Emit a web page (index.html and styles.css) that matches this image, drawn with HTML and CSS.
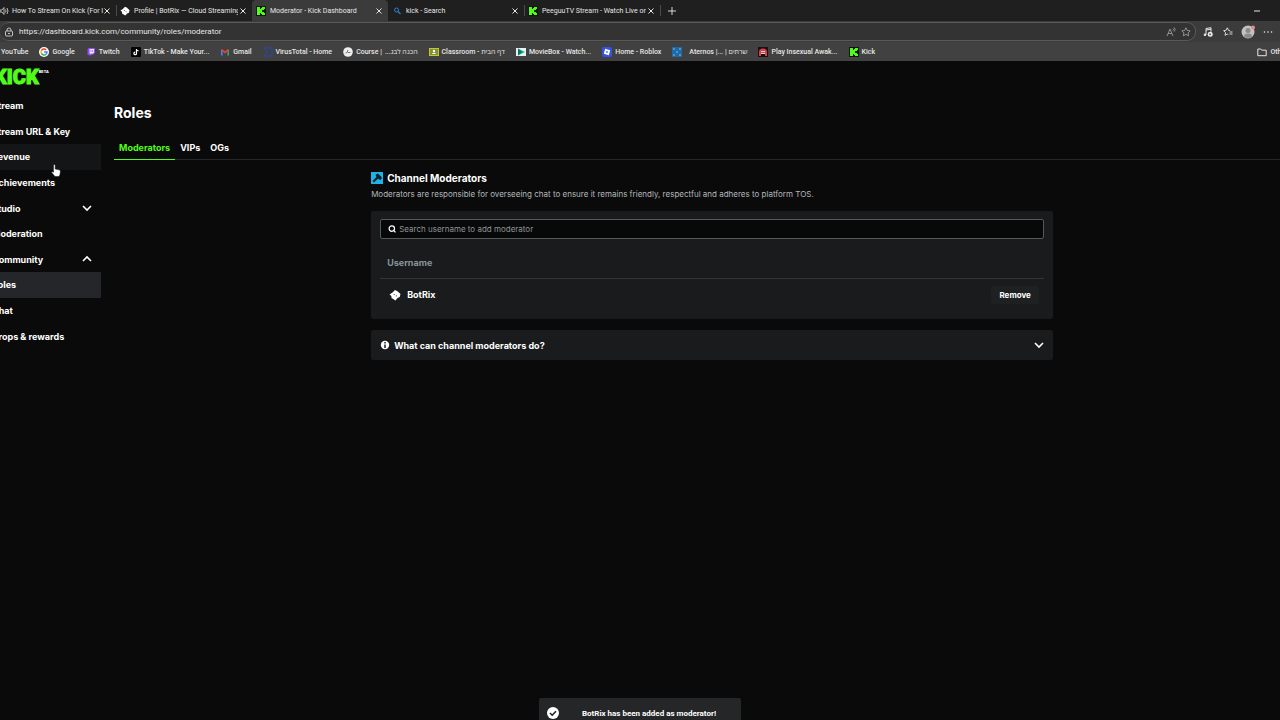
FILE: index.html
```
<!DOCTYPE html>
<html lang="en">
<head>
  <meta charset="UTF-8" />
  <meta name="viewport" content="width=device-width, initial-scale=1.0" />
  <title>Moderator - Kick Dashboard</title>
  <link rel="stylesheet" href="styles.css">
</head>
<body>
  <!-- shared icons -->
  <svg class="sprite" aria-hidden="true">
    <symbol id="i-close" viewBox="0 0 10 10"><path d="M2.500 2.500l5 5M7.500 2.500l-5 5" fill="none" stroke="currentColor" stroke-width="1"/></symbol>
    <symbol id="i-kick" viewBox="0 0 10 10">
      <rect width="10" height="10" fill="#0a1a06"/>
      <g fill="#53fc18"><rect x="1" y="1" width="3" height="8"/><rect x="4" y="3" width="2" height="4"/><rect x="5" y="2" width="3" height="2"/><rect x="6" y="1" width="3" height="2"/><rect x="5" y="6" width="3" height="2"/><rect x="6" y="7" width="3" height="2"/></g>
    </symbol>
    <symbol id="i-botrix" viewBox="0 0 12 12">
      <path d="M.5 5.500L3.500 3.500L6 1l2.500 1.200L11.500 5l-.8 3-2.200 1L6.400 11.500 3.800 9.800 2.500 9 2.400 7z" fill="#fff"/>
      <circle cx="5.200" cy="5.500" r=".6" fill="#333"/><circle cx="7.300" cy="6.800" r=".6" fill="#333"/>
    </symbol>
    <symbol id="i-down" viewBox="0 0 10 10"><path d="M1 3l4 4 4-4" fill="none" stroke="currentColor" stroke-width="1.600"/></symbol>
    <symbol id="i-up" viewBox="0 0 10 10"><path d="M1 7l4-4 4 4" fill="none" stroke="currentColor" stroke-width="1.600"/></symbol>
  </svg>

  <header class="browser">
    <div class="tabstrip">
      <div class="tab first">
        <svg class="fav" viewBox="0 0 10 10"><path d="M0 4h2l2-2.500v7L2 6H0z" fill="none" stroke="#ddd" stroke-width=".8"/><path d="M5.500 3.500q1 1.500 0 3M7 2q2 3 0 6" fill="none" stroke="#ddd" stroke-width=".8"/></svg>
        <button class="tab-title">How To Stream On Kick (For I</button>
        <button class="tab-close" aria-label="Close tab"><svg><use href="#i-close"/></svg></button>
      </div>
      <div class="tab divided">
        <svg class="fav"><use href="#i-botrix"/></svg>
        <button class="tab-title">Profile | BotRix — Cloud Streaming</button>
        <button class="tab-close" aria-label="Close tab"><svg><use href="#i-close"/></svg></button>
      </div>
      <div class="tab active">
        <svg class="fav"><use href="#i-kick"/></svg>
        <button class="tab-title">Moderator - Kick Dashboard</button>
        <button class="tab-close" aria-label="Close tab"><svg><use href="#i-close"/></svg></button>
      </div>
      <div class="tab">
        <svg class="fav" viewBox="0 0 10 10"><circle cx="4.500" cy="4" r="2" fill="none" stroke="#2f7fd0"/><path d="M6 5.500L8.500 8" stroke="#2f7fd0" stroke-width="1.200"/></svg>
        <button class="tab-title">kick - Search</button>
        <button class="tab-close" aria-label="Close tab"><svg><use href="#i-close"/></svg></button>
      </div>
      <div class="tab divided">
        <svg class="fav"><use href="#i-kick"/></svg>
        <button class="tab-title">PeeguuTV Stream - Watch Live on</button>
        <button class="tab-close" aria-label="Close tab"><svg><use href="#i-close"/></svg></button>
      </div>
      <button class="new-tab divided" aria-label="New tab"><svg viewBox="0 0 10 10"><path d="M5 1v8M1 5h8" stroke="currentColor" stroke-width=".9"/></svg></button>
      <button class="minimize" aria-label="Minimize"><svg viewBox="0 0 10 10"><path d="M2 5h6" stroke="currentColor"/></svg></button>
    </div>

    <div class="toolbar">
      <div class="address">
        <svg viewBox="0 0 10 10"><rect x="1.500" y="4" width="7" height="5" rx="1" fill="none" stroke="currentColor" stroke-width=".8"/><path d="M3 4V3q0-2 2-2t2 2v1M4 6.500h2" fill="none" stroke="currentColor" stroke-width=".8"/></svg>
        <input type="text" aria-label="Address" value="https://dashboard.kick.com/community/roles/moderator">
        <button aria-label="Read aloud"><svg viewBox="0 0 10 10"><path d="M1 9l3-7 3 7M2 6.500h4M7 1.500q1 1 0 2M8.200.5q2 1.800 0 4" fill="none" stroke="#999" stroke-width=".9"/></svg></button>
        <button aria-label="Add to favorites"><svg viewBox="0 0 10 10"><path d="M5 .8l1.300 2.700 2.900.4-2.100 2 .5 2.900L5 7.400 2.400 8.800l.5-2.900-2.100-2 2.900-.4z" fill="none" stroke="#aaa" stroke-width=".8"/></svg></button>
      </div>
      <button aria-label="Media"><svg viewBox="0 0 10 10"><path d="M3 7.500V1.500l5-.8v4M3 3l5-.8" fill="none" stroke="currentColor"/><circle cx="2" cy="7.800" r="1.300" fill="currentColor"/><circle cx="7.200" cy="7.200" r="2.500" fill="#eee"/><path d="M6.500 6v2.400l1.800-1.200z" fill="#333"/></svg></button>
      <button aria-label="Favorites"><svg viewBox="0 0 10 10"><path d="M7 3.400L5.500 3.300 4.300.8 3.100 3.300.6 3.700l1.900 1.800L2 8.300l2.300-1.200 1 .5M6.500 5h3M6.500 7h3" fill="none" stroke="currentColor" stroke-width=".9"/></svg></button>
      <button class="profile" aria-label="Profile"><svg viewBox="0 0 14 14"><circle cx="7" cy="7" r="6.500" fill="#c4c2c0"/><circle cx="7" cy="5.500" r="2.500" fill="#8c8a88"/><path d="M3 11.500q0-3 4-3t4 3q-4 3-8 0z" fill="#8c8a88"/><circle cx="12" cy="2.500" r="2" fill="#e58b95"/></svg></button>
      <button aria-label="Settings and more"><svg viewBox="0 0 10 10" fill="currentColor"><circle cx="1.500" cy="5" r=".8"/><circle cx="5" cy="5" r=".8"/><circle cx="8.500" cy="5" r=".8"/></svg></button>
    </div>

    <nav class="bookmarks" aria-label="Bookmarks">
      <a href="#">YouTube</a>
      <a href="#"><svg viewBox="0 0 10 10"><circle cx="5" cy="5" r="5" fill="#fff"/><g fill="none" stroke-width="1.500"><path d="M7.200 3A3 3 0 0 0 2.400 3.600" stroke="#ea4335"/><path d="M2.400 3.600a3 3 0 0 0 0 2.800" stroke="#fbbc05"/><path d="M2.400 6.400A3 3 0 0 0 7 7.200" stroke="#34a853"/><path d="M7 7.200A3 3 0 0 0 8 5H5" stroke="#4285f4"/></g></svg>Google</a>
      <a href="#"><svg viewBox="0 0 10 10"><path d="M2.500 1H9v5L6.800 8H5L3.500 9.500V8H1.500V2.500z" fill="#9146ff"/><path d="M3.500 2H8v3.600L7 6.500H5.200L4.400 7.200v-.7h-.9z" fill="#eee"/><path d="M5 3v2M6.700 3v2" stroke="#9146ff" stroke-width=".7"/></svg>Twitch</a>
      <a href="#"><svg viewBox="0 0 10 10"><rect width="10" height="10" rx="1" fill="#050505"/><path d="M5.500 2v4.400a1.300 1.300 0 1 1-1.300-1.300M5.500 2q.3 1.600 2 1.800" fill="none" stroke="#fff" stroke-width="1.200"/></svg>TikTok - Make Your...</a>
      <a href="#"><svg viewBox="0 0 10 10" fill="none" stroke-width="1.600"><path d="M1.800 8.500V3" stroke="#4285f4"/><path d="M8.200 8.500V3" stroke="#34a853"/><path d="M1.500 2.500L5 5.400l3.500-2.900" stroke="#ea4335"/></svg>Gmail</a>
      <a href="#"><svg viewBox="0 0 10 10"><path d="M1 1h8v8H1l3.500-4z" fill="none" stroke="#2b45b8"/></svg>VirusTotal - Home</a>
      <a href="#"><svg viewBox="0 0 10 10"><circle cx="5" cy="5" r="4.800" fill="#eee"/><path d="M2.500 6q2 .5 2.500-3M5 5.500h2.500" fill="none" stroke="#777"/></svg>Course | <bdi dir="rtl">הכנה לבג...</bdi></a>
      <a href="#"><svg viewBox="0 0 10 10"><rect y="1" width="10" height="8" fill="#e3b62d"/><rect x="1" y="2" width="8" height="6" fill="#6f9b35"/><circle cx="5" cy="4" r="1.200" fill="#fff"/><path d="M2.800 7q2.200-2.600 4.400 0z" fill="#fff"/></svg>Classroom - דף הבית</a>
      <a href="#"><svg viewBox="0 0 10 10"><rect y="1" width="10" height="8" fill="#e9f2f0"/><path d="M2 1.500v7L9 5z" fill="#17b59b"/><path d="M2 1.500l4 3.500-4 3.500z" fill="#16705f"/></svg>MovieBox - Watch...</a>
      <a href="#"><svg viewBox="0 0 10 10"><rect width="10" height="10" rx="2" fill="#3552e8"/><path d="M3.200 1.800l5 1.400-1.400 5-5-1.400zM4.500 4.100l-.4 1.400 1.400.4.400-1.400z" fill="#fff" fill-rule="evenodd"/></svg>Home - Roblox</a>
      <a href="#" class="wide"><svg viewBox="0 0 10 10"><rect width="10" height="10" fill="#1f6aa5"/><path d="M1 1h2v2H1zM7 1h2v2H7zM1 7h2v2H1zM7 7h2v2H7zM4 4h2v2H4z" fill="#4a97d0"/></svg>Aternos |... | שרתים</a>
      <a href="#"><svg viewBox="0 0 10 10"><rect width="10" height="10" fill="#1b1012"/><path d="M1 9V5q0-3.500 4-3.500T9 5v4H7V7H3v2z" fill="#d8414e"/><path d="M3 4h4v3H3z" fill="#f2c3b8"/><path d="M4 5v1M6 5v1" stroke="#222"/></svg>Play Insexual Awak...</a>
      <a href="#"><svg><use href="#i-kick"/></svg>Kick</a>
      <a href="#" class="others"><svg viewBox="0 0 10 10"><path d="M.8 2h3l1 1.200h4.400v5.500H.8z" fill="none" stroke="currentColor"/></svg>Other favorites</a>
    </nav>
  </header>

  <div class="app">
    <aside class="sidebar">
      <a class="logo" href="#">KICK<sup>BETA</sup></a>
      <nav class="menu" aria-label="Dashboard">
        <a href="#">Stream</a>
        <a href="#">Stream URL &amp; Key</a>
        <a href="#" class="hovered">Revenue</a>
        <a href="#">Achievements</a>
        <button>Studio <svg><use href="#i-down"/></svg></button>
        <a href="#">Moderation</a>
        <button aria-expanded="true">Community <svg><use href="#i-up"/></svg></button>
        <a href="#" class="current">Roles</a>
        <a href="#">Chat</a>
        <a href="#">Drops &amp; rewards</a>
      </nav>
    </aside>

    <main class="main">
      <h1>Roles</h1>
      <div class="role-tabs">
        <button class="selected">Moderators</button>
        <button>VIPs</button>
        <button>OGs</button>
      </div>

      <section class="content">
        <h2><svg viewBox="0 0 12 12"><rect width="12" height="12" fill="#1cb4e6"/><path d="M4.500 3L6.500 1.500l1 .5 3 3 .5 1-1.500 2-1.500-.5-.8-1L3 10.500 1.500 9 5.500 5z" fill="#10202a"/></svg>Channel Moderators</h2>
        <p class="lead">Moderators are responsible for overseeing chat to ensure it remains friendly, respectful and adheres to platform TOS.</p>

        <div class="card">
          <label class="search">
            <svg viewBox="0 0 10 10"><circle cx="4.800" cy="4.600" r="2.700" fill="none" stroke="currentColor" stroke-width="1.200"/><path d="M6.800 6.600L8.500 8.300" stroke="currentColor" stroke-width="1.200"/></svg>
            <input type="text" placeholder="Search username to add moderator" aria-label="Search username to add moderator">
          </label>
          <table class="users">
            <thead>
              <tr><th colspan="2">Username</th></tr>
            </thead>
            <tbody>
              <tr>
                <td><span class="user"><svg><use href="#i-botrix"/></svg>BotRix</span></td>
                <td class="action"><button class="remove">Remove</button></td>
              </tr>
            </tbody>
          </table>
        </div>

        <button class="accordion">
          <svg viewBox="0 0 10 10"><circle cx="5" cy="5" r="4.200" fill="#fff"/><path d="M5 2v1.500M5 4.500V8" stroke="#191b1c" stroke-width="1.500"/></svg>
          What can channel moderators do?
          <svg class="chevron"><use href="#i-down"/></svg>
        </button>
      </section>
    </main>
  </div>

  <div class="toast" role="status">
    <svg viewBox="0 0 12 12"><circle cx="6" cy="6" r="6" fill="#fff"/><path d="M3 6l2.200 2.200L9 4.200" fill="none" stroke="#222" stroke-width="1.600"/></svg>
    <span>BotRix has been added as moderator!</span>
  </div>

  <svg class="pointer" viewBox="0 0 10 13" aria-hidden="true"><path d="M2.500 1q1-1 1.700 0v4l4 .8q1.300.4 1.200 1.700L9 10.500 8 12.500H4L.6 8.600q-.2-1.500 1.900-.4z" fill="#fff" stroke="#111" stroke-width=".5"/></svg>
</body>
</html>
```
FILE: styles.css
```
* {
  margin: 0;
  padding: 0;
  box-sizing: border-box;
}

body {
  font-family: 'Inter', 'Liberation Sans', sans-serif;
  min-height: 100vh;
  background: #0a0a0a;
  color: #fff;
  overflow: hidden;
}

button,
input {
  font: inherit;
  color: inherit;
  background: none;
  border: 0;
  outline: 0;
}

a {
  color: inherit;
  text-decoration: none;
}

svg {
  display: block;
  flex: none;
  width: 10px;
  height: 10px;
}

.sprite {
  position: absolute;
  width: 0;
  height: 0;
}

/* Browser */
.browser {
  font-family: 'Roboto', 'Open Sans', 'DejaVu Sans', sans-serif;
  font-size: 7px;
  font-weight: 500;
  color: #e6e6e6;
  background: #3b3b3b;
}

.tabstrip {
  display: flex;
  height: 21px;
  font-weight: 400;
  background: #1f1f1f;
}

.tab {
  display: flex;
  align-items: center;
  gap: 4px;
  width: 136px;
  padding: 0 4px;
}

.tab.first {
  width: 116px;
  padding-left: 0;
  gap: 2px;
}

.tab.active {
  background: #3b3b3b;
  border-radius: 4px 4px 0 0;
}

.divided {
  background: linear-gradient(#4a4a4a, #4a4a4a) left center / 1px 11px no-repeat;
}

.tab-title {
  flex: 1;
  min-width: 0;
  margin-right: -4px;
  overflow: hidden;
  white-space: nowrap;
  text-align: left;
}

.new-tab {
  padding: 0 7px;
}

.minimize {
  margin-left: auto;
  margin-right: 18px;
}

.toolbar {
  display: flex;
  align-items: center;
  gap: 10px;
  height: 21px;
  padding-right: 7px;
}

.address {
  flex: 1;
  display: flex;
  align-items: center;
  gap: 5px;
  height: 19px;
  margin-right: -3px;
  padding: 0 4px;
  border: 1px solid #5a5a5a;
  border-left: 0;
  border-radius: 9px;
  background: #333;
}

.address input {
  flex: 1;
  font-size: 8px;
  font-weight: 400;
}

.profile {
  margin: 0 -2px;
}

.profile svg {
  width: 14px;
  height: 14px;
}

.bookmarks {
  display: flex;
  align-items: center;
  gap: 11px;
  height: 19px;
  padding-left: 1px;
  white-space: nowrap;
  background: #414141;
}

.bookmarks a {
  display: flex;
  align-items: center;
  gap: 3px;
}

.bookmarks .wide {
  gap: 7px;
}

.bookmarks .others {
  margin-left: auto;
  margin-right: -37px;
}

/* Dashboard */
.app {
  display: flex;
  margin: 0 -30px 0 -20px;
}

.sidebar {
  width: 121px;
  font-size: 9px;
  font-weight: 700;
}

.logo {
  display: flex;
  height: 32px;
  padding: 4px 0 0 14px;
  font-family: 'Roboto', sans-serif;
  font-size: 20px;
  line-height: 24px;
  font-weight: 900;
  color: #53fc18;
  -webkit-text-stroke: 1px #53fc18;
}

.logo sup {
  font-size: 4px;
  line-height: 14px;
  color: #fff;
  -webkit-text-stroke: 0;
}

.menu {
  display: grid;
  grid-auto-rows: 1fr;
  height: 256px;
}

.menu a,
.menu button {
  display: flex;
  align-items: center;
  justify-content: space-between;
  padding: 0 9px 0 12px;
}

.hovered {
  background: #141516;
}

.current {
  background: #24262a;
}

.main {
  flex: 1;
  padding: 40px 0 0 13px;
}

h1 {
  font-size: 14px;
  line-height: 24px;
  font-weight: 700;
}

.role-tabs {
  display: flex;
  margin-top: 11px;
  border-bottom: 1px solid #24272a;
}

.role-tabs button {
  height: 24px;
  padding: 0 5px 1px;
  margin-bottom: -1px;
  font-size: 9px;
  font-weight: 700;
  border-bottom: 1px solid transparent;
}

.role-tabs .selected {
  color: #53fc18;
  border-color: #53fc18;
}

.content {
  width: 57%;
  margin: 9px auto 0;
}

h2 {
  display: flex;
  align-items: center;
  gap: 4px;
  font-size: 10px;
  line-height: 18px;
  font-weight: 700;
}

h2 svg {
  width: 12px;
  height: 12px;
}

.lead {
  font-size: 8px;
  line-height: 15px;
  color: #b3b8bd;
}

.card {
  margin-top: 9px;
  padding: 8px 9px;
  background: #191b1c;
  border-radius: 2px;
}

.search {
  display: flex;
  align-items: center;
  gap: 2px;
  height: 20px;
  padding: 0 6px;
  border: 1px solid #55585a;
  border-radius: 2px;
  background: #070808;
}

.search input {
  flex: 1;
  font-size: 8px;
}

.search input::placeholder {
  color: #8f9498;
}

.users {
  width: 100%;
  border-collapse: collapse;
  font-size: 9px;
}

.users th {
  height: 39px;
  padding: 8px 7px 0;
  text-align: left;
  font-weight: 700;
  color: #8b949a;
  border-bottom: 1px solid #313436;
}

.users td {
  height: 33px;
  font-weight: 700;
}

.user {
  display: flex;
  align-items: center;
  gap: 6px;
  padding-left: 9px;
}

.user svg {
  width: 12px;
  height: 12px;
}

.users .action {
  padding-right: 5px;
  text-align: right;
}

.remove {
  height: 18px;
  padding: 0 8px;
  font-size: 8px;
  font-weight: 700;
  border-radius: 2px;
  background: #1e2022;
}

.accordion {
  display: flex;
  align-items: center;
  gap: 4px;
  width: 100%;
  height: 30px;
  margin-top: 11px;
  padding: 0 9px;
  font-size: 9px;
  font-weight: 700;
  border-radius: 2px;
  background: #191b1c;
}

.chevron {
  margin-left: auto;
}

.toast {
  position: fixed;
  bottom: -8px;
  left: 50%;
  transform: translateX(-50%);
  display: flex;
  align-items: center;
  width: 202px;
  height: 30px;
  padding: 0 8px;
  font-family: 'Roboto', sans-serif;
  font-size: 8px;
  font-weight: 700;
  border-radius: 2px;
  background: #242628;
}

.toast svg {
  width: 12px;
  height: 12px;
}

.toast span {
  flex: 1;
  padding-left: 6px;
  text-align: center;
  white-space: nowrap;
}

.pointer {
  position: absolute;
  top: 164px;
  left: 51px;
  width: 10px;
  height: 13px;
}
```
